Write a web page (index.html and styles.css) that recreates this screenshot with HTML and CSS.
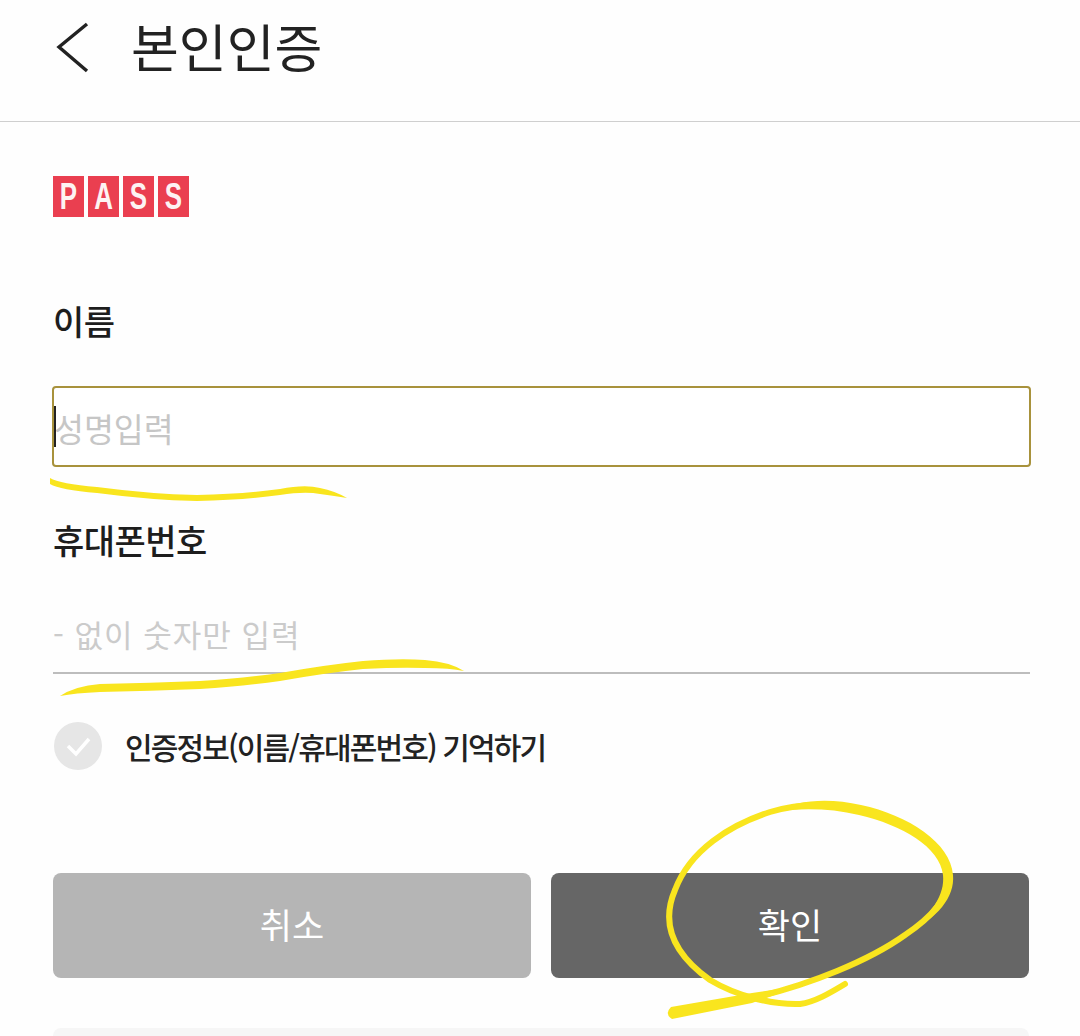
FILE: index.html
```html
<!DOCTYPE html>
<html lang="ko">
<head>
    <meta charset="UTF-8">
    <meta name="viewport" content="width=device-width, initial-scale=1.0">
    <title>본인인증</title>
    <link rel="stylesheet" href="styles.css">
</head>
<body>
    <!-- Header -->
    <div class="header">
        <svg class="back-icon" width="34" height="52" viewBox="0 0 34 52">
            <path d="M31 2 L3 25 L31 49" fill="none" stroke="#222" stroke-width="3.4"/>
        </svg>
        <div class="page-title">본인인증</div>
    </div>

    <div class="content">
        <div class="logo">
            <div class="logo-tile"><span>P</span></div>
            <div class="logo-tile"><span>A</span></div>
            <div class="logo-tile"><span>S</span></div>
            <div class="logo-tile"><span>S</span></div>
        </div>

        <div class="field-label name-label">이름</div>
        <div class="name-box">
            <span class="caret"></span>
            <input type="text" class="name-input" placeholder="성명입력">
        </div>

        <div class="field-label phone-label">휴대폰번호</div>
        <input type="text" class="phone-input" placeholder="- 없이 숫자만 입력">

        <div class="remember">
            <svg class="check-icon" width="48" height="48" viewBox="0 0 48 48">
                <circle cx="24" cy="24" r="24" fill="#e6e6e6"/>
                <path d="M14 24 L22 32 L35 17" fill="none" stroke="#fff" stroke-width="3.5"/>
            </svg>
            <div class="remember-text">인증정보(이름/휴대폰번호) 기억하기</div>
        </div>

        <div class="buttons">
            <button class="btn btn-cancel">취소</button>
            <button class="btn btn-ok">확인</button>
        </div>

        <div class="bottom-card"></div>
    </div>

    <!-- Yellow pen marks drawn over the screenshot -->
    <svg class="pen-marks" width="1080" height="1036" viewBox="0 0 1080 1036">
        <g fill="#f9e51e">
            <path d="M50 478 Q60 484 97 487 Q150 494 197 495 Q245 494 280 489 Q305 484 320 488 Q335 491 347 498 Q335 496 320 494 Q305 491 280 495 Q245 500 197 501 Q150 500 97 493 Q60 490 50 484Z"/>
            <path d="M60 696 Q75 686 100 684 Q150 683 200 681 Q245 678 280 673 Q325 665 363 661 Q400 658 425 660 Q450 662 464 671 Q450 668 425 668 Q400 667 363 669 Q325 673 280 681 Q245 686 200 689 Q150 691 100 692 Q75 693 60 696Z"/>
            <path d="M770 812 C800 799 830 798 861 805 C908 815 951 843 953 875 C955 897 938 918 905 935 C932 914 945 895 943 875 C940 847 902 825 859 815 C830 808 800 808 770 812Z"/>
            <path d="M671 1007 L752 993 L800 986 L752 1003 L672 1019 Q664 1014 671 1007Z"/>
        </g>
        <path fill="none" stroke="#f9e51e" stroke-width="6" stroke-linecap="round" d="M752 998 C810 985 870 960 905 935 C935 915 950 895 948 875 C945 845 905 820 860 810 C830 803 800 803 770 812 C730 825 690 850 675 890 C660 925 675 955 710 980 C735 995 770 1005 800 1004 C815 1002 830 993 845 984"/>
    </svg>
</body>
</html>
```

FILE: styles.css
```css
* {margin: 0; padding: 0; box-sizing: border-box;}
html, body {height: 1036px; overflow: hidden;}
body {position: relative; font-family: "Noto Sans CJK KR", "Noto Sans", sans-serif; background-color: #fefefe; color: #222;}

.header {height: 122px; display: flex; align-items: flex-start; border-bottom: 1px solid #cfcfcf; padding-left: 56px;}
.back-icon {display: block; margin-right: 41px; margin-top: 22px;}
.page-title {font-size: 52px; font-weight: 400; line-height: 60px; margin-top: 16px;}

.content {padding: 0 51px 0 53px;}

.logo {display: flex; gap: 4px; margin-top: 54px;}
.logo-tile {width: 31px; height: 41px; background-color: #ea3f50; color: #fdf3f3; font-family: "Liberation Sans", sans-serif; font-weight: bold; font-size: 37px; line-height: 41px; text-align: center;}
.logo-tile span {display: block; transform: scaleX(0.7);}

.field-label {font-size: 34px; font-weight: 500; line-height: 44px; color: #1d1d1d; letter-spacing: -0.5px;}
.name-label {margin-top: 82px;}
.phone-label {margin-top: 51px;}

.name-box {position: relative; height: 81px; margin: 43px -2px 0 -1px; border: 2px solid #a8923c; border-radius: 4px; background: #fff; display: flex; align-items: center;}
.caret {position: absolute; left: 0; top: 18px; width: 2px; height: 41px; background-color: #222;}
.name-input, .phone-input {border: none; outline: none; background: transparent; font-family: inherit; color: #222;}
.name-input {width: 100%; height: 100%; padding-top: 2px; font-size: 32.5px;}
.name-input::placeholder {color: #c6c6c6; opacity: 1;}

.phone-input {display: block; width: calc(100% + 1px); height: 83px; margin-top: 29px; padding-top: 3px; font-size: 31px; border-bottom: 2px solid #bdbdbd; letter-spacing: 1px;}
.phone-input::placeholder {color: #cbcbcb; opacity: 1;}

.remember {display: flex; align-items: center; margin-top: 48px; padding-left: 1px;}
.check-icon {display: block; margin-right: 23px;}
.remember-text {font-size: 30px; font-weight: 500; line-height: 48px; letter-spacing: -1.85px; color: #222;}

.buttons {display: flex; gap: 20px; margin-top: 103px;}
.btn {flex: 1; height: 105px; border: none; border-radius: 8px; padding-bottom: 4px; color: #fff; font-family: inherit; font-size: 35px; cursor: pointer;}
.btn-cancel {background-color: #b5b5b5;}
.btn-ok {background-color: #666;}

.bottom-card {height: 8px; margin-top: 50px; background-color: #f6f6f6; border-radius: 12px 12px 0 0;}

.pen-marks {position: absolute; left: 0; top: 0; pointer-events: none;}
```
